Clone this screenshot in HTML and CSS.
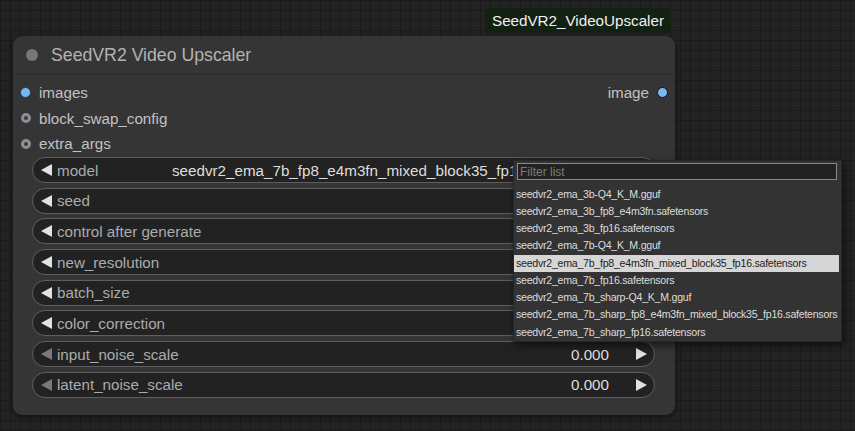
FILE: index.html
```html
<!DOCTYPE html>
<html lang="en">
<head>
  <meta charset="UTF-8">
  <title>SeedVR2 Video Upscaler</title>
  <link rel="stylesheet" href="styles.css">
</head>
<body>
  <div class="canvas">
    <div class="badge">SeedVR2_VideoUpscaler</div>

    <div class="node">
      <div class="node-title">
        <span class="title-dot"></span>
        <span class="title-text">SeedVR2 Video Upscaler</span>
      </div>

      <div class="slots">
        <div class="slot-row">
          <div class="slot"><span class="dot dot-image"></span>images</div>
          <div class="slot slot-out">image<span class="dot dot-image dot-out"></span></div>
        </div>
        <div class="slot-row">
          <div class="slot"><span class="dot dot-optional"></span>block_swap_config</div>
        </div>
        <div class="slot-row">
          <div class="slot"><span class="dot dot-optional"></span>extra_args</div>
        </div>
      </div>

      <div class="widgets">
        <div class="widget">
          <span class="arrow-left"></span>
          <span class="w-label">model</span>
          <span class="w-value clipped">seedvr2_ema_7b_fp8_e4m3fn_mixed_block35_fp16.safetensors</span>
          <span class="arrow-right"></span>
        </div>
        <div class="widget">
          <span class="arrow-left"></span>
          <span class="w-label">seed</span>
        </div>
        <div class="widget">
          <span class="arrow-left"></span>
          <span class="w-label">control after generate</span>
        </div>
        <div class="widget">
          <span class="arrow-left"></span>
          <span class="w-label">new_resolution</span>
        </div>
        <div class="widget">
          <span class="arrow-left"></span>
          <span class="w-label">batch_size</span>
        </div>
        <div class="widget">
          <span class="arrow-left"></span>
          <span class="w-label">color_correction</span>
        </div>
        <div class="widget">
          <span class="arrow-left dim"></span>
          <span class="w-label">input_noise_scale</span>
          <span class="w-value">0.000</span>
          <span class="arrow-right"></span>
        </div>
        <div class="widget">
          <span class="arrow-left dim"></span>
          <span class="w-label">latent_noise_scale</span>
          <span class="w-value">0.000</span>
          <span class="arrow-right"></span>
        </div>
      </div>
    </div>

    <div class="dropdown">
      <input class="filter" type="text" placeholder="Filter list">
      <div class="items">
        <div class="item">seedvr2_ema_3b-Q4_K_M.gguf</div>
        <div class="item">seedvr2_ema_3b_fp8_e4m3fn.safetensors</div>
        <div class="item">seedvr2_ema_3b_fp16.safetensors</div>
        <div class="item">seedvr2_ema_7b-Q4_K_M.gguf</div>
        <div class="item selected">seedvr2_ema_7b_fp8_e4m3fn_mixed_block35_fp16.safetensors</div>
        <div class="item">seedvr2_ema_7b_fp16.safetensors</div>
        <div class="item">seedvr2_ema_7b_sharp-Q4_K_M.gguf</div>
        <div class="item">seedvr2_ema_7b_sharp_fp8_e4m3fn_mixed_block35_fp16.safetensors</div>
        <div class="item">seedvr2_ema_7b_sharp_fp16.safetensors</div>
      </div>
    </div>
  </div>
</body>
</html>
```

FILE: styles.css
```css
body {
  margin: 0;
  font-family: 'Liberation Sans', Arial, sans-serif;
  background-color: #232323;
  background-image:
    linear-gradient(#1b1b1b 1px, transparent 1px),
    linear-gradient(90deg, #1b1b1b 1px, transparent 1px);
  background-size: 10px 10px;
  overflow: hidden;
}
.canvas {
  position: relative;
  width: 855px;
  height: 431px;
}

/* node badge above the node */
.badge {
  position: absolute;
  left: 485px;
  top: 8px;
  height: 25px;
  padding: 0 7px;
  display: flex;
  align-items: center;
  background-color: #132113;
  border-radius: 5px 5px 0 0;
  color: #f0f0f0;
  font-size: 15.2px;
}

/* node */
.node {
  position: absolute;
  left: 13px;
  top: 36px;
  width: 662px;
  height: 379px;
  background-color: #353535;
  border-radius: 9px;
  box-shadow: 0 2px 6px rgba(0,0,0,0.5);
}
.node-title {
  height: 38px;
  display: flex;
  align-items: center;
  padding-left: 13px;
  border-bottom: 1px solid #2b2b2b;
}
.title-dot {
  width: 12px;
  height: 12px;
  border-radius: 50%;
  background-color: #777;
  margin-right: 13px;
}
.title-text {
  color: #b3b3b3;
  font-size: 17.7px;
}

.slots {
  padding-top: 5px;
}
.slot-row {
  height: 25.5px;
  display: flex;
  align-items: center;
  justify-content: space-between;
}
.slot {
  display: flex;
  align-items: center;
  color: #c2c2c2;
  font-size: 15.2px;
}
.dot {
  width: 11px;
  height: 11px;
  border-radius: 50%;
  box-sizing: border-box;
  margin-left: 7px;
  margin-right: 8px;
}
.dot-image {
  background-color: #78b8f0;
  border: 1px solid #2a3a4a;
}
.dot-out {
  border: 1.5px solid #111;
  margin-left: 8px;
  margin-right: 7px;
}
.dot-optional {
  width: 10px;
  height: 10px;
  margin-left: 8px;
  background-color: #3a3a44;
  border: 3px solid #8e8e98;
}

/* widgets */
.widgets {
  display: flex;
  flex-direction: column;
  gap: 4.7px;
  padding: 0.5px 20px 0 19px;
}
.widget {
  height: 26px;
  box-sizing: border-box;
  display: flex;
  align-items: center;
  background-color: #222;
  border: 1px solid #5e5e5e;
  border-radius: 13px;
  padding: 0 7px 0 8px;
  font-size: 15.2px;
  white-space: nowrap;
  overflow: hidden;
}
.arrow-left {
  flex: none;
  width: 0;
  height: 0;
  border-top: 6px solid transparent;
  border-bottom: 6px solid transparent;
  border-right: 11px solid #e2e2e2;
}
.arrow-left.dim {
  border-right-color: #7a7a7a;
}
.arrow-right {
  flex: none;
  width: 0;
  height: 0;
  border-top: 6px solid transparent;
  border-bottom: 6px solid transparent;
  border-left: 11px solid #e2e2e2;
}
.w-label {
  color: #ababab;
  margin-left: 5px;
  flex: none;
}
.w-value {
  color: #dedede;
  margin-left: auto;
  margin-right: 27px;
}
/* model value is cut where the open menu covers it */
.w-value.clipped {
  flex: none;
  width: 343px;
  margin-right: 121px;
  overflow: hidden;
}

/* combo dropdown menu */
.dropdown {
  position: absolute;
  left: 513px;
  top: 160px;
  width: 329px;
  height: 182px;
  box-sizing: border-box;
  background-color: #333;
  border: 1px solid #272727;
  box-shadow: 2px 3px 8px rgba(0,0,0,0.6);
  padding-top: 2px;
  font-size: 10.6px;
  letter-spacing: -0.25px;
}
.filter {
  display: block;
  box-sizing: border-box;
  width: 320px;
  height: 17px;
  margin: 0 0 0 3px;
  padding: 0 2px;
  background-color: #222;
  border: 1px solid #8a8a8a;
  color: #ddd;
  font-family: inherit;
  font-size: 12px;
  letter-spacing: 0;
  outline: none;
}
.filter::placeholder {
  color: #7a7a7a;
}
.items {
  margin-top: 5.5px;
}
.item {
  height: 17.25px;
  line-height: 17.25px;
  padding-left: 2px;
  margin-right: 2px;
  color: #dcdcdc;
  white-space: nowrap;
}
.item.selected {
  background-color: #d6d6d6;
  color: #1e1e1e;
}
```
